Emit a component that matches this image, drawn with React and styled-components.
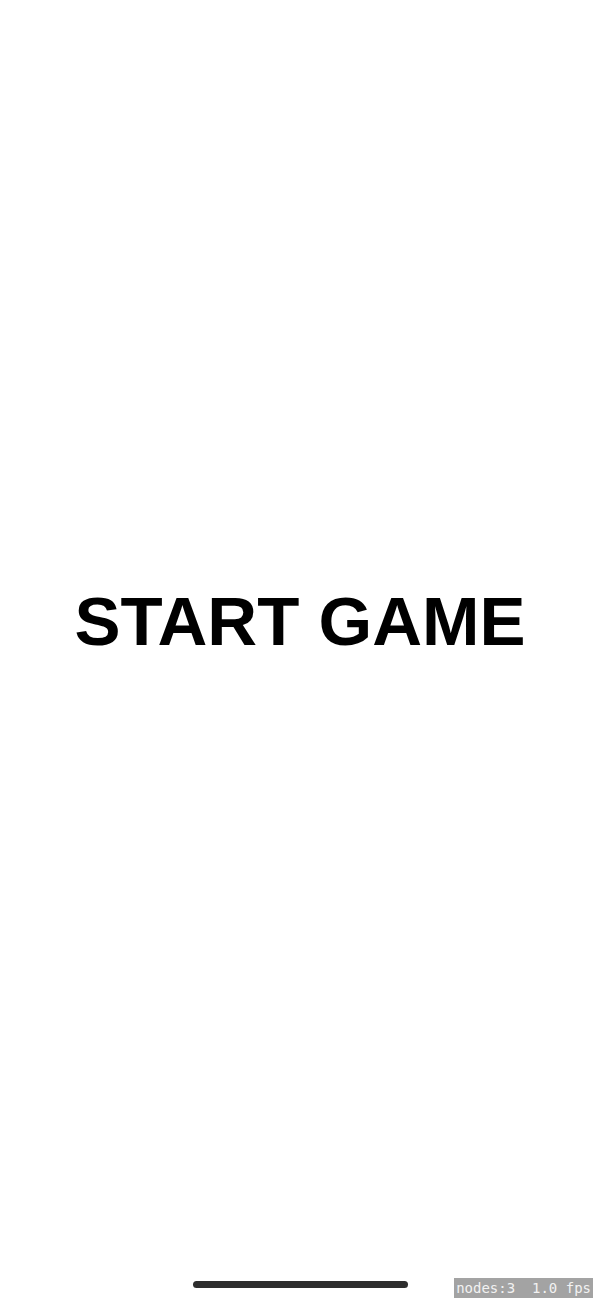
import React from "react";
import styled, { createGlobalStyle } from "styled-components";

const GlobalStyle = createGlobalStyle`
  html, body {
    margin: 0;
    padding: 0;
    background: #fff;
  }

  body {
    font-family: "Liberation Sans", Arial, sans-serif;
  }
`;

const Screen = styled.div`
  position: relative;
  width: 100%;
  height: 1300px;
  display: flex;
  flex-direction: column;
  background: #fff;
  overflow: hidden;
`;

const Stage = styled.main`
  flex: 1;
  display: flex;
  align-items: center;
  justify-content: center;
  padding-bottom: 38px;
`;

const StartButton = styled.button`
  border: 0;
  background: transparent;
  padding: 0;
  margin: 0;
  cursor: pointer;
  font-family: "Liberation Sans", Arial, sans-serif;
  font-weight: 700;
  font-size: 69px;
  line-height: 78px;
  color: #000;
  letter-spacing: 0;
`;

const HomeBar = styled.div`
  display: flex;
  justify-content: center;
  padding-bottom: 12px;

  &:after {
    content: "";
    width: 215px;
    height: 7px;
    border-radius: 4px;
    background: #2e2e2e;
  }
`;

const PerfBadge = styled.div`
  position: absolute;
  right: 7px;
  bottom: 2px;
  height: 20px;
  padding: 0 2px;
  display: flex;
  align-items: center;
  background: #a3a3a3;
  color: #f2f2f2;
  font-family: "DejaVu Sans Mono", "Liberation Mono", monospace;
  font-size: 14px;
  white-space: pre;
`;

const App = () => (
  <>
    <GlobalStyle />
    <Screen>
      <Stage>
        <StartButton>START GAME</StartButton>
      </Stage>
      <HomeBar />
      <PerfBadge>{"nodes:3  1.0 fps"}</PerfBadge>
    </Screen>
  </>
);

export default App;
